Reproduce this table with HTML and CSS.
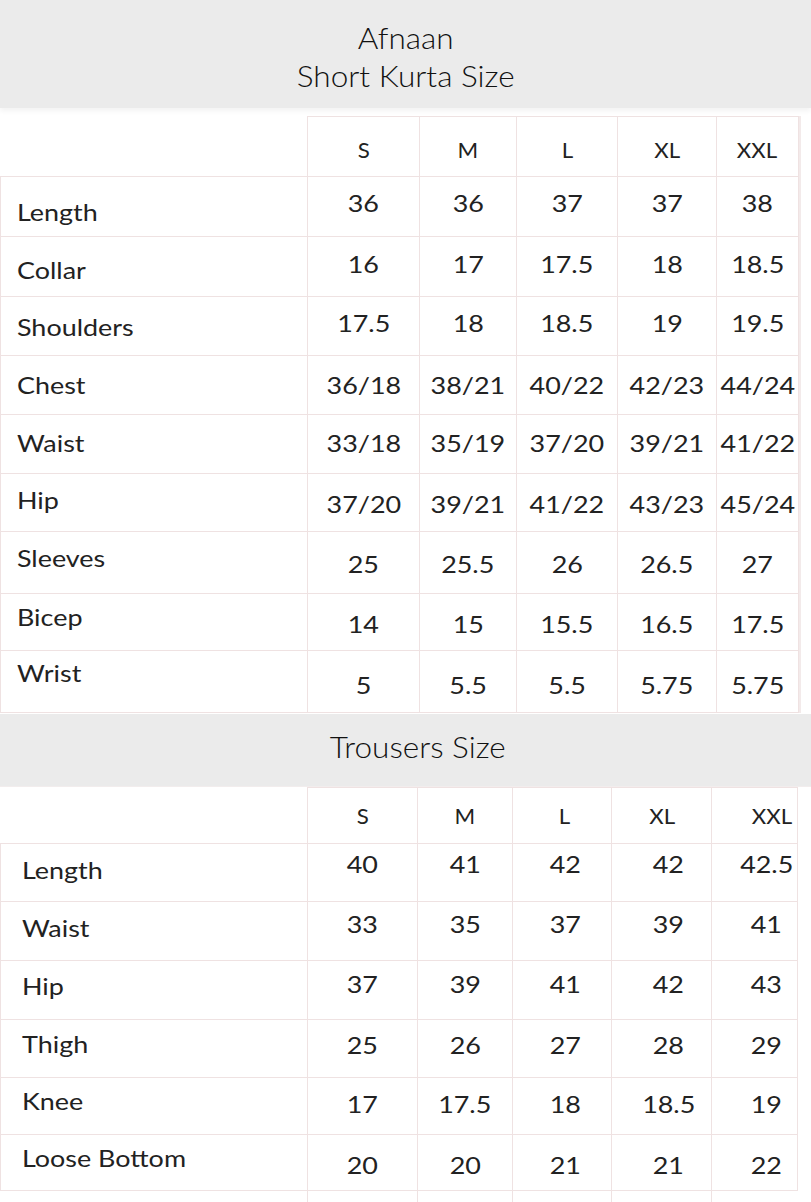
FILE: index.html
```html
<!DOCTYPE html>
<html lang="en">
<head>
<meta charset="utf-8">
<title>Afnaan Size Chart</title>
<link rel="stylesheet" href="styles.css">
</head>
<body>
<header class="band band-top">
  <div class="title"><span>Afnaan</span></div>
  <div class="title"><span>Short Kurta Size</span></div>
</header>

<div class="chart kurta">
  <div class="row hrow">
    <div class="cell corner"></div>
    <div class="cell head"><span>S</span></div>
    <div class="cell head"><span>M</span></div>
    <div class="cell head"><span>L</span></div>
    <div class="cell head"><span>XL</span></div>
    <div class="cell head"><span>XXL</span></div>
  </div>
  <div class="row k1">
    <div class="cell label"><span>Length</span></div>
    <div class="cell"><span>36</span></div><div class="cell"><span>36</span></div><div class="cell"><span>37</span></div><div class="cell"><span>37</span></div><div class="cell"><span>38</span></div>
  </div>
  <div class="row k2">
    <div class="cell label"><span>Collar</span></div>
    <div class="cell"><span>16</span></div><div class="cell"><span>17</span></div><div class="cell"><span>17.5</span></div><div class="cell"><span>18</span></div><div class="cell"><span>18.5</span></div>
  </div>
  <div class="row k3">
    <div class="cell label"><span>Shoulders</span></div>
    <div class="cell"><span>17.5</span></div><div class="cell"><span>18</span></div><div class="cell"><span>18.5</span></div><div class="cell"><span>19</span></div><div class="cell"><span>19.5</span></div>
  </div>
  <div class="row k4">
    <div class="cell label"><span>Chest</span></div>
    <div class="cell"><span>36/18</span></div><div class="cell"><span>38/21</span></div><div class="cell"><span>40/22</span></div><div class="cell"><span>42/23</span></div><div class="cell"><span>44/24</span></div>
  </div>
  <div class="row k5">
    <div class="cell label"><span>Waist</span></div>
    <div class="cell"><span>33/18</span></div><div class="cell"><span>35/19</span></div><div class="cell"><span>37/20</span></div><div class="cell"><span>39/21</span></div><div class="cell"><span>41/22</span></div>
  </div>
  <div class="row k6">
    <div class="cell label"><span>Hip</span></div>
    <div class="cell"><span>37/20</span></div><div class="cell"><span>39/21</span></div><div class="cell"><span>41/22</span></div><div class="cell"><span>43/23</span></div><div class="cell"><span>45/24</span></div>
  </div>
  <div class="row k7">
    <div class="cell label"><span>Sleeves</span></div>
    <div class="cell"><span>25</span></div><div class="cell"><span>25.5</span></div><div class="cell"><span>26</span></div><div class="cell"><span>26.5</span></div><div class="cell"><span>27</span></div>
  </div>
  <div class="row k8">
    <div class="cell label"><span>Bicep</span></div>
    <div class="cell"><span>14</span></div><div class="cell"><span>15</span></div><div class="cell"><span>15.5</span></div><div class="cell"><span>16.5</span></div><div class="cell"><span>17.5</span></div>
  </div>
  <div class="row k9">
    <div class="cell label"><span>Wrist</span></div>
    <div class="cell"><span>5</span></div><div class="cell"><span>5.5</span></div><div class="cell"><span>5.5</span></div><div class="cell"><span>5.75</span></div><div class="cell"><span>5.75</span></div>
  </div>
</div>

<div class="band band-mid">
  <div class="subtitle"><span>Trousers Size</span></div>
</div>

<div class="chart trousers">
  <div class="row hrow">
    <div class="cell corner"></div>
    <div class="cell head"><span>S</span></div>
    <div class="cell head"><span>M</span></div>
    <div class="cell head"><span>L</span></div>
    <div class="cell head"><span>XL</span></div>
    <div class="cell head"><span>XXL</span></div>
  </div>
  <div class="row t1">
    <div class="cell label"><span>Length</span></div>
    <div class="cell"><span>40</span></div><div class="cell"><span>41</span></div><div class="cell"><span>42</span></div><div class="cell"><span>42</span></div><div class="cell"><span>42.5</span></div>
  </div>
  <div class="row t2">
    <div class="cell label"><span>Waist</span></div>
    <div class="cell"><span>33</span></div><div class="cell"><span>35</span></div><div class="cell"><span>37</span></div><div class="cell"><span>39</span></div><div class="cell"><span>41</span></div>
  </div>
  <div class="row t3">
    <div class="cell label"><span>Hip</span></div>
    <div class="cell"><span>37</span></div><div class="cell"><span>39</span></div><div class="cell"><span>41</span></div><div class="cell"><span>42</span></div><div class="cell"><span>43</span></div>
  </div>
  <div class="row t4">
    <div class="cell label"><span>Thigh</span></div>
    <div class="cell"><span>25</span></div><div class="cell"><span>26</span></div><div class="cell"><span>27</span></div><div class="cell"><span>28</span></div><div class="cell"><span>29</span></div>
  </div>
  <div class="row t5">
    <div class="cell label"><span>Knee</span></div>
    <div class="cell"><span>17</span></div><div class="cell"><span>17.5</span></div><div class="cell"><span>18</span></div><div class="cell"><span>18.5</span></div><div class="cell"><span>19</span></div>
  </div>
  <div class="row t6">
    <div class="cell label"><span>Loose Bottom</span></div>
    <div class="cell"><span>20</span></div><div class="cell"><span>20</span></div><div class="cell"><span>21</span></div><div class="cell"><span>21</span></div><div class="cell"><span>22</span></div>
  </div>
  <div class="row tail">
    <div class="cell"></div><div class="cell"></div><div class="cell"></div><div class="cell"></div><div class="cell"></div><div class="cell"></div>
  </div>
</div>
</body>
</html>
```

FILE: styles.css
```css
html, body {
  margin: 0;
  padding: 0;
  background: #ffffff;
}

body {
  width: 811px;
  height: 1202px;
  overflow: hidden;
  font-family: Lato, "Open Sans", "Liberation Sans", sans-serif;
  color: #222222;
}

/* ---------- grey title bands ---------- */
.band {
  background: #ebebeb;
  text-align: center;
}

.band span {
  display: inline-block;
  transform: scaleX(1.05);
}

.band-top {
  height: 108px;
  padding-top: 18px;
  box-sizing: border-box;
  margin-bottom: 8px;
  box-shadow: 0 3px 5px rgba(0, 0, 0, 0.05);
}

.title {
  font-size: 30px;
  font-weight: 300;
  line-height: 38px;
  color: #111;
}

.band-mid {
  height: 73px;
  margin-top: 1px;
  border-bottom: 1px solid #f2eded;
  box-sizing: border-box;
  display: flex;
  align-items: center;
  justify-content: center;
  padding-bottom: 8px;
}

.subtitle {
  font-size: 30px;
  font-weight: 300;
  color: #111;
}

.subtitle span {
  transform: translateX(12px) scaleX(1.05);
}

/* ---------- tables ---------- */
.chart {
  display: grid;
}

.row {
  display: contents;
}

.kurta {
  grid-template-columns: 308px 112px 97px 101px 99px 82px;
  grid-template-rows: 61px 60px 60px 59px 59px 59px 58px 62px 57px 62px;
  width: 801px;
  border-right: 2px solid #f3eaea;
  box-sizing: border-box;
}

.trousers {
  grid-template-columns: 308px 110px 95px 99px 100px 86px;
  grid-template-rows: 57px 58px 59px 59px 58px 57px 56px 20px;
}

.cell {
  box-sizing: border-box;
  border-right: 1px solid #efe2e2;
  border-bottom: 1px solid #efe2e2;
  display: flex;
  align-items: center;
  justify-content: center;
  font-size: 23px;
}

.cell span {
  display: inline-block;
  transform: translate(var(--dx, 0px), var(--vy, 0px)) scaleX(1.17);
}

.head {
  border-top: 1px solid #efe2e2;
  font-size: 21px;
}

.head span {
  transform: translate(var(--hx, 0px), var(--hy, 0px)) scaleX(1.06);
}

.kurta .hrow { --hy: 3px; }

.corner {
  border-top: none;
}

.label {
  justify-content: flex-start;
  border-left: 1px solid #efe2e2;
  padding-left: 16px;
}

.label span {
  transform-origin: left center;
  transform: translateY(var(--ly, 0px)) scaleX(1.17);
}

.trousers .label {
  padding-left: 21px;
}

/* per-row vertical placement of the printed text */
.k1 { --vy: -4px; --ly: 5px; }
.k2 { --vy: -3px; --ly: 3px; }
.k3 { --vy: -3px; --ly: 1px; }
.k4 { --vy: 0px; --ly: 0px; }
.k5 { --vy: -1px; --ly: -1px; }
.k6 { --vy: 1px; --ly: -3px; }
.k7 { --vy: 1px; --ly: -5px; }
.k8 { --vy: 2px; --ly: -5px; }
.k9 { --vy: 3px; --ly: -9px; }

.t1 { --vy: -9px; --ly: -3px; }
.t2 { --vy: -7px; --ly: -3px; }
.t3 { --vy: -6px; --ly: -4px; }
.t4 { --vy: -4px; --ly: -5px; }
.t5 { --vy: -2px; --ly: -5px; }
.t6 { --vy: 2px; --ly: -5px; }

/* trousers values sit a little right of centre in the last columns */
.trousers .cell:nth-child(4) { --dx: 3px; --hx: 2px; }
.trousers .cell:nth-child(5) { --dx: 7px; --hx: 1px; }
.trousers .cell:nth-child(6) { --dx: 12px; --hx: 18px; }

.tail .cell {
  border-bottom: none;
}

.tail .cell:first-child {
  border-left: none;
}

.tail .cell:last-child {
  border-right: none;
}
```
